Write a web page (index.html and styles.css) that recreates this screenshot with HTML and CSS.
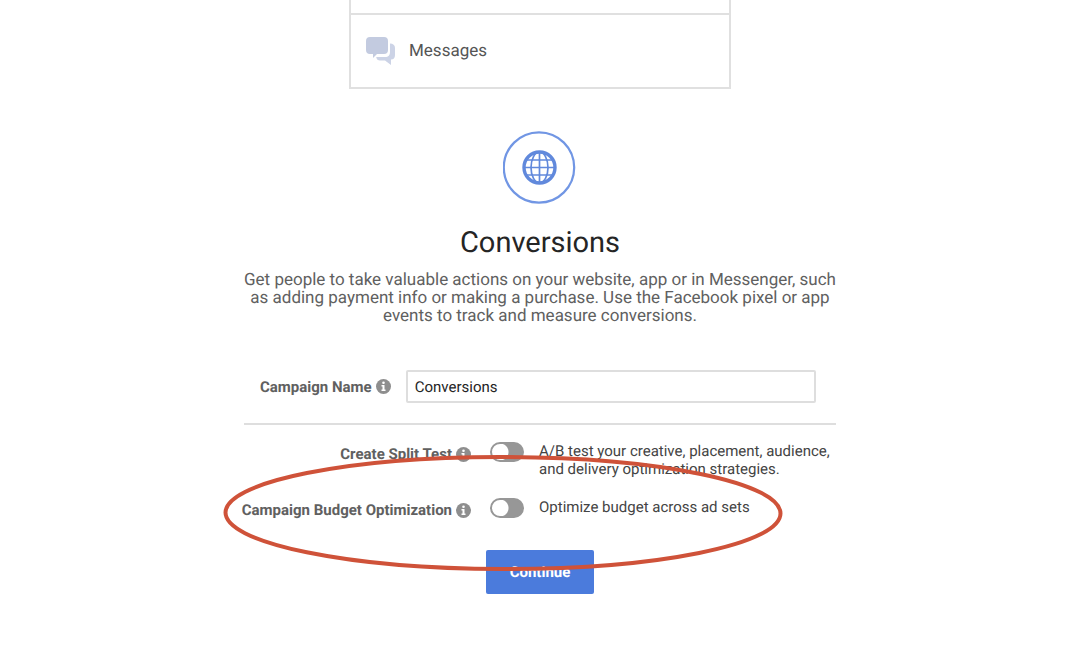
FILE: index.html
```html
<!DOCTYPE html>
<html lang="en">
<head>
<meta charset="utf-8">
<meta name="viewport" content="width=device-width, initial-scale=1">
<title>Conversions</title>
<link rel="stylesheet" href="styles.css">
</head>
<body>
<svg class="sprite" aria-hidden="true">
  <symbol id="info" viewBox="0 0 15 15">
    <circle cx="7.5" cy="7.5" r="7.5" fill="#8e8e8e"/>
    <circle cx="7.5" cy="3.8" r="1.3" fill="#fff"/>
    <path d="M5.500 6h3v4.600h1V12h-4v-1.400h1V7.400h-1z" fill="#fff"/>
  </symbol>
</svg>
<main class="page">
  <div class="objectives">
    <div class="objective objective-cut"></div>
    <div class="objective">
      <svg class="chat" viewBox="0 0 30 30" aria-hidden="true">
        <path d="M4 1h14a4 4 0 0 1 4 4v9a4 4 0 0 1-4 4h-7l-4 4v-4H4a4 4 0 0 1-4-4V5a4 4 0 0 1 4-4z" fill="#c3cbe0"/>
        <path d="M24 7.500c3 0 5 1.500 5 4.500v7c0 3-1.500 4.500-4 4.500V29l-6-4.500h-5c-2 0-3.500-1-3.800-3.500H19c3.500 0 5-2 5-5z" fill="#ccd3e6"/>
      </svg>
      <span>Messages</span>
    </div>
  </div>

  <svg class="globe" viewBox="0 0 74 74" fill="none" stroke="#6189dc" aria-hidden="true">
    <circle cx="36" cy="36.500" r="35.200" stroke="#7196e4" stroke-width="2.200"/>
    <circle cx="36.500" cy="36.500" r="15.500" stroke-width="3.400"/>
    <ellipse cx="36.500" cy="36.500" rx="8.500" ry="15.500" stroke-width="1.700"/>
    <path d="M36.500 21v31M21 36.500h31M24 29h25M24 44h25" stroke-width="1.700"/>
  </svg>
  <h1 class="title">Conversions</h1>
  <p class="summary">Get people to take valuable actions on your website, app or in Messenger, such as adding payment info or making a purchase. Use the Facebook pixel or app events to track and measure conversions.</p>

  <form class="form">
    <div class="name-row">
      <label class="label" for="name">Campaign Name <svg class="info"><use href="#info"/></svg></label>
      <input class="name" id="name" type="text" value="Conversions">
    </div>
    <div class="options">
      <label class="label" for="split">Create Split Test <svg class="info"><use href="#info"/></svg></label>
      <input class="toggle" id="split" type="checkbox">
      <p class="hint">A/B test your creative, placement, audience, and delivery optimization strategies.</p>
      <label class="label" for="budget">Campaign Budget Optimization <svg class="info"><use href="#info"/></svg></label>
      <input class="toggle" id="budget" type="checkbox">
      <p class="hint">Optimize budget across ad sets</p>
      <svg class="marker" viewBox="0 0 560 118" fill="none" aria-hidden="true">
        <ellipse cx="280" cy="59" rx="277.500" ry="56" stroke="#cf5239" stroke-width="4" transform="rotate(.1 280 59)"/>
      </svg>
    </div>
    <button class="continue" type="button">Continue</button>
  </form>
</main>
</body>
</html>
```
FILE: styles.css
```css
* {
  box-sizing: border-box;
}

body {
  margin: 0;
  background: #fff;
  color: #444;
  font-family: Roboto, "Liberation Sans", sans-serif;
  text-rendering: geometricPrecision;
}

.sprite {
  position: absolute;
  width: 0;
  height: 0;
}

.page {
  display: flex;
  flex-direction: column;
  align-items: center;
  padding-bottom: 56px;
}

.objectives {
  width: 100%;
  max-width: 382px;
  border: 2px solid #e0e0e0;
  border-top: 0;
}

.objective {
  display: flex;
  align-items: center;
  gap: 13px;
  padding: 21px 15px;
  color: #555;
  font-size: 17px;
  line-height: 30px;
}

.objective-cut {
  height: 15px;
  padding: 0;
  border-bottom: 2px solid #e0e0e0;
}

.chat {
  width: 30px;
  height: 30px;
}

.globe {
  width: 74px;
  height: 74px;
  margin-top: 42px;
}

.title {
  margin: 20px 0 10px;
  color: #252525;
  font-size: 29px;
  font-weight: 400;
  line-height: 36px;
}

.summary {
  max-width: 592px;
  margin: 0;
  color: #606060;
  font-size: 17px;
  line-height: 18px;
  text-align: center;
}

.form {
  display: flex;
  flex-direction: column;
  align-items: center;
  width: 100%;
  max-width: 592px;
  margin-top: 45px;
}

.name-row {
  display: flex;
  align-items: center;
  gap: 15px;
  width: 100%;
  padding: 0 20px 20px 16px;
  border-bottom: 2px solid #dedede;
}

.label {
  display: flex;
  align-items: center;
  justify-content: flex-end;
  gap: 4px;
  color: #606060;
  font-size: 15px;
  font-weight: 700;
  line-height: 18px;
  white-space: nowrap;
}

.info {
  flex: none;
  width: 15px;
  height: 15px;
}

.name {
  flex: 1;
  min-width: 0;
  height: 33px;
  padding: 0 7px;
  border: 2px solid #dedede;
  border-radius: 2px;
  color: #252525;
  font: 15px Roboto, "Liberation Sans", sans-serif;
  text-rendering: inherit;
}

.options {
  position: relative;
  display: grid;
  grid-template-columns: 227px 34px 1fr;
  column-gap: 19px;
  row-gap: 20px;
  width: 100%;
  padding: 17px 0 31px;
}

.options .label,
.toggle {
  align-self: start;
}

.options .label {
  margin-top: 3px;
}

.toggle {
  appearance: none;
  width: 34px;
  height: 20px;
  margin: 0;
  border: 2px solid #979797;
  border-radius: 10px;
  background: radial-gradient(circle at 8px 8px, #fff 8px, #979797 9px);
}

.hint {
  margin: 0 0 0 -4px;
  font-size: 15px;
  line-height: 18px;
}

.marker {
  position: absolute;
  top: 29px;
  left: -21px;
  width: 560px;
  height: 118px;
}

.continue {
  padding: 13px 24px;
  border: 0;
  border-radius: 2px;
  background: #4b7bdc;
  color: #fff;
  font: 700 15px/18px Roboto, "Liberation Sans", sans-serif;
  text-rendering: inherit;
}
```
